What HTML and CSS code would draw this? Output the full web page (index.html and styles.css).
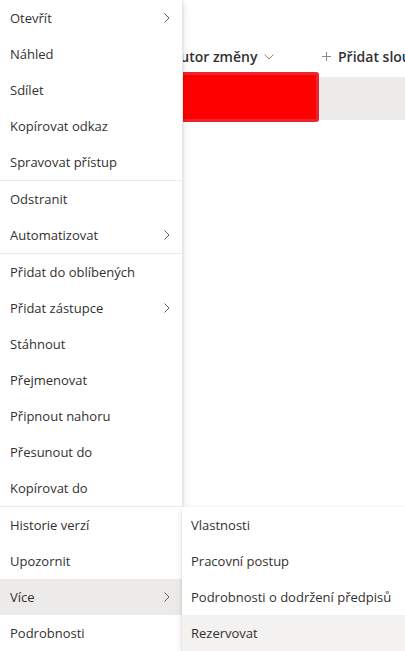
FILE: index.html
```html
<!DOCTYPE html>
<html lang="cs">
<head>
<meta charset="utf-8">
<link rel="stylesheet" href="styles.css">
</head>
<body>
<div class="page">
  <div class="list">
    <div class="list-header">
      <div class="col col-author">
        <span class="col-title">Autor změny</span>
        <svg class="col-chev" width="10" height="6" viewBox="0 0 10 6"><path d="M0.5 0.5 L5 5 L9.5 0.5" fill="none" stroke="#8a8886" stroke-width="1"/></svg>
      </div>
      <div class="col col-add">
        <svg class="plus" width="9" height="9" viewBox="0 0 9 9"><path d="M4.5 0 V9 M0 4.5 H9" stroke="#8a8886" stroke-width="1"/></svg>
        <span class="col-title">Přidat sloupec</span>
      </div>
    </div>
    <div class="list-row">
      <div class="redact"></div>
    </div>
  </div>

  <div class="menu">
    <div class="group">
      <div class="item"><span>Otevřít</span><svg class="chev" width="6" height="10" viewBox="0 0 6 10"><path d="M0.5 0.5 L5 5 L0.5 9.5" fill="none" stroke="#605e5c" stroke-width="1"/></svg></div>
      <div class="item"><span>Náhled</span></div>
      <div class="item"><span>Sdílet</span></div>
      <div class="item"><span>Kopírovat odkaz</span></div>
      <div class="item"><span>Spravovat přístup</span></div>
    </div>
    <div class="group">
      <div class="item"><span>Odstranit</span></div>
      <div class="item"><span>Automatizovat</span><svg class="chev" width="6" height="10" viewBox="0 0 6 10"><path d="M0.5 0.5 L5 5 L0.5 9.5" fill="none" stroke="#605e5c" stroke-width="1"/></svg></div>
    </div>
    <div class="group">
      <div class="item"><span>Přidat do oblíbených</span></div>
      <div class="item"><span>Přidat zástupce</span><svg class="chev" width="6" height="10" viewBox="0 0 6 10"><path d="M0.5 0.5 L5 5 L0.5 9.5" fill="none" stroke="#605e5c" stroke-width="1"/></svg></div>
      <div class="item"><span>Stáhnout</span></div>
      <div class="item"><span>Přejmenovat</span></div>
      <div class="item"><span>Připnout nahoru</span></div>
      <div class="item"><span>Přesunout do</span></div>
      <div class="item"><span>Kopírovat do</span></div>
    </div>
    <div class="group">
      <div class="item"><span>Historie verzí</span></div>
      <div class="item"><span>Upozornit</span></div>
      <div class="item active"><span>Více</span><svg class="chev" width="6" height="10" viewBox="0 0 6 10"><path d="M0.5 0.5 L5 5 L0.5 9.5" fill="none" stroke="#605e5c" stroke-width="1"/></svg></div>
      <div class="item"><span>Podrobnosti</span></div>
    </div>
  </div>

  <div class="submenu">
    <div class="item"><span>Vlastnosti</span></div>
    <div class="item"><span>Pracovní postup</span></div>
    <div class="item"><span>Podrobnosti o dodržení předpisů</span></div>
    <div class="item hover"><span>Rezervovat</span></div>
  </div>
</div>
</body>
</html>
```

FILE: styles.css
```css
* { box-sizing: border-box; }
html, body {
  margin: 0;
  padding: 0;
  background: #ffffff;
}
body {
  width: 405px;
  height: 651px;
  overflow: hidden;
  font-family: "Open Sans", "Noto Sans", sans-serif;
  color: #323130;
}
.page {
  position: relative;
  width: 405px;
  height: 651px;
  overflow: hidden;
}

/* background list */
.list {
  padding-top: 36px;
}
.list-header {
  display: flex;
  align-items: center;
  height: 41px;
  white-space: nowrap;
}
.col {
  display: flex;
  align-items: center;
  font-size: 14px;
  font-weight: 600;
  color: #323130;
}
.col-author {
  margin-left: 171px;
  width: 151px;
  flex: none;
}
.col-chev {
  margin-left: 7px;
  margin-top: 1px;
}
.col-add .plus {
  margin-right: 7px;
}
.list-row {
  position: relative;
  margin-left: 180px;
  height: 43px;
  background: #edebe9;
}
.redact {
  position: absolute;
  left: -1px;
  top: -5px;
  width: 140px;
  height: 50px;
  background: #ff0000;
  border: 3px solid #ec2430;
  border-radius: 3px;
}

/* context menu */
.menu {
  position: absolute;
  left: 0;
  top: 0;
  width: 183px;
  background: #ffffff;
  border-right: 1px solid #e8e6e4;
  box-shadow: 0 3.2px 7.2px rgba(0,0,0,0.13), 0 0.6px 1.8px rgba(0,0,0,0.11);
}
.group + .group {
  border-top: 1px solid #edebe9;
}
.item {
  display: flex;
  align-items: center;
  justify-content: space-between;
  height: 36px;
  padding: 0 12px 0 10px;
  font-size: 13px;
  color: #323130;
  white-space: nowrap;
}
.item.active {
  background: #edebe9;
}
.chev {
  flex: none;
}

/* submenu */
.submenu {
  position: absolute;
  left: 182px;
  top: 507px;
  width: 240px;
  background: #ffffff;
  box-shadow: 0 3.2px 7.2px rgba(0,0,0,0.13), 0 0.6px 1.8px rgba(0,0,0,0.11);
}
.submenu .item {
  padding-left: 9px;
}
.submenu .item.hover {
  background: #f3f2f1;
}
```
